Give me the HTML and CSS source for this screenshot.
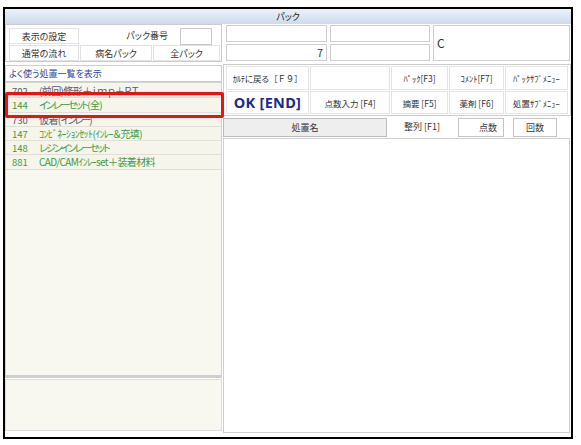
FILE: index.html
```html
<!DOCTYPE html>
<html lang="ja">
<head>
<meta charset="utf-8">
<title>パック</title>
<link rel="stylesheet" href="styles.css">
</head>
<body>
<div class="window">
  <div class="titlebar">パック</div>
  <div class="top">
    <div class="top-left">
      <div class="tl-row">
        <div class="btn w70">表示の設定</div>
        <div class="label">パック番号</div>
        <div class="input"></div>
      </div>
      <div class="tl-row">
        <div class="btn w70">通常の流れ</div>
        <div class="btn w72">病名パック</div>
        <div class="btn w67">全パック</div>
      </div>
    </div>
    <div class="top-right">
      <div class="field-col c1">
        <div class="field"></div>
        <div class="field num">7</div>
      </div>
      <div class="field-col c2">
        <div class="field"></div>
        <div class="field"></div>
      </div>
      <div class="field big">C</div>
    </div>
  </div>
  <div class="main">
    <div class="left">
      <div class="list-title">よく使う処置一覧を表示</div>
      <div class="list">
        <div class="row gray"><span class="code">702</span><span class="name">(前回)修形＋ｉｍｐ＋ＲＴ</span></div>
        <div class="row"><span class="code">144</span><span class="name"><span class="kana">インレーセット</span>(全)</span></div>
        <div class="row gray"><span class="code">730</span><span class="name">仮着(<span class="kana">インレー</span>)</span></div>
        <div class="row"><span class="code">147</span><span class="name">ｺﾝﾋﾞﾈｰｼｮﾝｾｯﾄ(ｲﾝﾚｰ＆充填)</span></div>
        <div class="row"><span class="code">148</span><span class="name"><span class="kana">レジンインレーセット</span></span></div>
        <div class="row"><span class="code">881</span><span class="name">CAD/CAMｲﾝﾚｰset＋装着材料</span></div>
        <div class="highlight"></div>
      </div>
      <div class="memo"></div>
    </div>
    <div class="right">
      <div class="toolbar">
        <div class="cell wide">ｶﾙﾃに戻る［Ｆ９］</div>
        <div class="cell"></div>
        <div class="cell">ﾊﾟｯｸ[F3]</div>
        <div class="cell">ｺﾒﾝﾄ[F7]</div>
        <div class="cell">ﾊﾟｯｸｻﾌﾞﾒﾆｭｰ</div>
        <div class="cell ok">OK [END]</div>
        <div class="cell">点数入力 [F4]</div>
        <div class="cell">摘要 [F5]</div>
        <div class="cell">薬剤 [F6]</div>
        <div class="cell">処置ｻﾌﾞﾒﾆｭｰ</div>
      </div>
      <div class="header">
        <div class="hbtn name-col">処置名</div>
        <div class="sort">整列 [F1]</div>
        <div class="hbox points">点数</div>
        <div class="hbox times">回数</div>
      </div>
      <div class="content"></div>
    </div>
  </div>
</div>
</body>
</html>
```

FILE: styles.css
```css
* { box-sizing: border-box; }
html, body { margin: 0; background: #ffffff; }
body {
  padding: 7px 0 0 3px;
  font-family: "Noto Sans CJK JP", "Noto Sans", sans-serif;
  font-size: 9px;
  color: #333333;
  font-feature-settings: "palt";
}
.window {
  width: 570px;
  height: 432px;
  border: 2px solid #000000;
  display: flex;
  flex-direction: column;
}
.titlebar {
  height: 15px;
  line-height: 15px;
  text-align: center;
  font-size: 9px;
  color: #222222;
  background: linear-gradient(#ecf2f9, #cddbea);
}
.top {
  height: 40px;
  display: flex;
}
.top-left {
  width: 217px;
  height: 38px;
  border: 1px solid #cccccc;
  padding: 3px 0 0 3px;
  display: flex;
  flex-direction: column;
  gap: 1px;
}
.tl-row {
  display: flex;
  gap: 1px;
  height: 16px;
}
.btn {
  height: 16px;
  line-height: 15px;
  text-align: center;
  border: 1px solid #e2e2e2;
  background: #ffffff;
  color: #333333;
}
.w70 { width: 70px; }
.w72 { width: 72px; }
.w67 { width: 67px; }
.label {
  width: 89px;
  text-align: right;
  line-height: 15px;
  padding-right: 1px;
}
.input {
  margin-left: 10px;
  width: 32px;
  height: 17px;
  border: 1px solid #c8c8c8;
  background: #ffffff;
}
.top-right {
  display: flex;
  padding: 1px 0 0 4px;
  gap: 3px;
}
.field-col {
  display: flex;
  flex-direction: column;
  gap: 2px;
}
.c1 { width: 101px; }
.c2 { width: 100px; }
.field {
  height: 17px;
  border: 1px solid #cfcfcf;
  background: #ffffff;
}
.field.num {
  text-align: right;
  padding-right: 3px;
  font-size: 11px;
  line-height: 15px;
  color: #333333;
}
.field.big {
  width: 137px;
  height: 36px;
  font-size: 12px;
  line-height: 34px;
  padding-left: 3px;
  color: #333333;
}
.main {
  flex: 1;
  display: flex;
  gap: 1px;
}
.left {
  width: 217px;
  display: flex;
  flex-direction: column;
}
.list-title {
  height: 17px;
  margin-top: 1px;
  border: 1px solid #cccccc;
  background: #ffffff;
  color: #2b47a3;
  padding-left: 3px;
  line-height: 15px;
}
.list {
  position: relative;
  height: 296px;
  padding-top: 1px;
  background: #f8f8f1;
  border: 1px solid #d2d2d2;
  border-bottom: 3px solid #cfcfcf;
}
.row {
  height: 14.3px;
  line-height: 14px;
  border-bottom: 1px solid #e0e0d6;
  background: #f5f5ec;
  color: #3e9c3e;
  display: flex;
  font-size: 9.5px;
  white-space: nowrap;
}
.row.gray { color: #5a5a72; }
.code {
  width: 33px;
  padding-left: 6px;
}
.name {
  font-size: 10px;
  letter-spacing: -0.6px;
}
.kana { letter-spacing: -1.9px; }
.highlight {
  position: absolute;
  left: -1px;
  top: 9px;
  width: 219px;
  height: 26px;
  border: 3px solid #ee1111;
  border-radius: 2px;
}
.memo {
  margin-top: 1px;
  height: 52px;
  background: #f8f8f1;
  border: 1px solid #dddddd;
}
.right {
  width: 348px;
  display: flex;
  flex-direction: column;
}
.toolbar {
  height: 52px;
  border: 1px solid #cccccc;
  padding: 1px 2px 0 2px;
  display: grid;
  grid-template-columns: 83px 80px 57px 55px 63px;
  grid-template-rows: 24px 23px;
  gap: 1px;
}
.cell {
  border: 1px solid #e4e4e4;
  background: #ffffff;
  text-align: center;
  line-height: 22px;
  white-space: nowrap;
  font-size: 8.5px;
  color: #333333;
}
.cell.wide {
  font-feature-settings: normal;
  letter-spacing: -0.3px;
}
.cell.ok {
  font-family: "Noto Sans", "DejaVu Sans", sans-serif;
  font-weight: bold;
  font-size: 14.5px;
  color: #1b2a8c;
  line-height: 21px;
  letter-spacing: 0.3px;
}
.header {
  height: 19px;
  margin-top: 2px;
  display: flex;
}
.hbtn.name-col {
  width: 164px;
  border: 1px solid #bdbdbd;
  background: #eeeeee;
  text-align: center;
  line-height: 17px;
}
.sort {
  width: 70px;
  text-align: center;
  line-height: 18px;
}
.hbox {
  height: 19px;
  border: 1px solid #c4c4c4;
  background: #ffffff;
  line-height: 17px;
}
.points {
  width: 46px;
  margin-left: 1px;
  text-align: right;
  padding-right: 6px;
}
.times {
  width: 44px;
  margin-left: 9px;
  text-align: center;
}
.content {
  margin-top: 1px;
  width: 347px;
  height: 295px;
  border: 1px solid #cfcfcf;
  background: #ffffff;
}
```
